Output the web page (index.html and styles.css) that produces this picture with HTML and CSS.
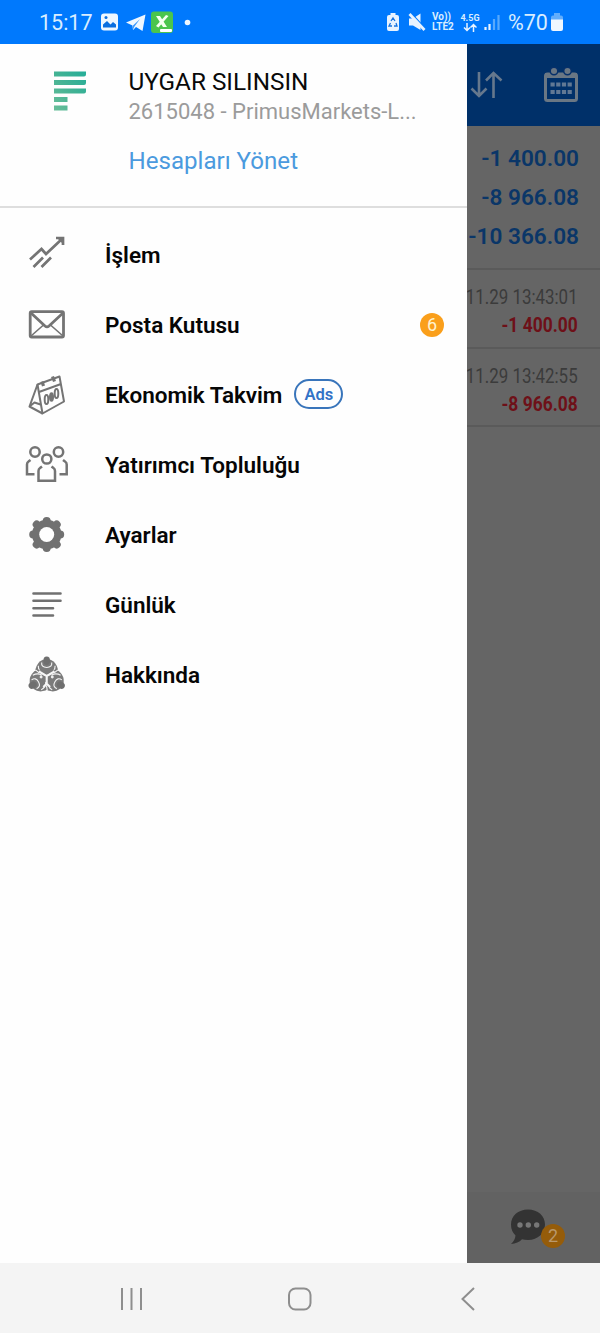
FILE: index.html
```html
<!DOCTYPE html>
<html lang="tr">
<head>
<meta charset="utf-8">
<title>Menü</title>
<link rel="stylesheet" href="styles.css">
</head>
<body>
<header class="status">
  <span class="clock">15:17</span>
  <svg class="status-left" width="94" height="24" viewBox="0 0 94 24">
    <rect x="1" y="2.500" width="17" height="17" rx="3" fill="#eef7ff"/>
    <path d="M3 16.500v-3l4-3.500 3.500 3.500 2.500-2.500 3 2.500v3z" fill="#0a6fe0"/><circle cx="6" cy="6.500" r="1.500" fill="#0a6fe0"/>
    <path d="M26 11.500L45.500 3.500 42.500 20 36 16 33 19 32.500 14.500z" fill="#eef7ff"/>
    <path d="M33 14.500l7-6.500-5.500 7.500-1.500 3z" fill="#3b98fc"/>
    <rect x="51" y="0.500" width="22" height="21.500" rx="3" fill="#4bc54d"/>
    <path d="M56 5h4l7 11h-4zM66 4l2.500 1-10 11.500-2.500-1.500z" fill="#f5fff0"/><rect x="60" y="18" width="12" height="3" rx="1" fill="#fff"/>
    <circle cx="87.500" cy="11.500" r="2.800" fill="#eef7ff"/>
  </svg>
  <div class="status-right">
    <svg width="41" height="20" viewBox="0 0 41 20">
      <path d="M1 5a2 2 0 0 1 2-2h1.500V1h5v2H11a2 2 0 0 1 2 2v12a2 2 0 0 1-2 2H3a2 2 0 0 1-2-2z" fill="#e8f3ff"/>
      <path d="M5 9l2-3 2 3M10 11l1 3H8M6 14H3l1.500-3" fill="none" stroke="#1874df" stroke-width="1.300"/>
      <path d="M23 6.500h4L34.500 1.500v16.500L27 13.500h-4z" fill="#e8f3ff"/>
      <path d="M26 2l13 14" stroke="#0079fd" stroke-width="1.200"/><path d="M23.500 2l15 16" stroke="#e8f3ff" stroke-width="2.700"/>
    </svg>
    <span class="tiny volte"><span>Vo))</span><span>LTE2</span></span>
    <span class="tiny net"><span>4.5G</span>
      <svg width="14" height="9" viewBox="0 0 14 9"><path d="M4 0v7.500M1 4.500l3 3 3-3M10.500 9V1.500M7.500 4.500l3-3 3 3" fill="none" stroke="#e8f3ff" stroke-width="1.500"/></svg>
    </span>
    <svg class="signal" width="17" height="17" viewBox="0 0 17 17"><path d="M1.500 13v3M5.500 10v6" stroke="#e8f3ff" stroke-width="2.200"/><path d="M10 5v11M14.500 1v15" stroke="#58a9fc" stroke-width="2.200"/></svg>
    <span class="percent">%70</span>
    <svg width="14" height="20" viewBox="0 0 14 20"><path d="M4 1h6V3.500h1a2 2 0 0 1 2 2v3H1v-3a2 2 0 0 1 2-2h1z" fill="#62adfb"/><path d="M1 7.500h12v9.500a2 2 0 0 1-2 2H3a2 2 0 0 1-2-2z" fill="#eff7ff"/></svg>
  </div>
</header>

<main class="screen">
  <aside class="drawer">
    <section class="account">
      <svg class="brand" width="34" height="42" viewBox="0 0 34 42">
        <defs><linearGradient id="g" gradientUnits="userSpaceOnUse" x1="0" y1="36" x2="34" y2="6"><stop offset="0" stop-color="#66bd99"/><stop offset=".5" stop-color="#45b394"/><stop offset="1" stop-color="#27ae98"/></linearGradient></defs>
        <path fill="url(#g)" d="M0 .5h32v3a2 2 0 0 1-2 2H0zM0 9h32v3a2 2 0 0 1-2 2H0zM0 17.500h32v3a2 2 0 0 1-2 2H0zM0 26h13.500v5H0zM0 34.500h13.500v5H0z"/>
      </svg>
      <div class="who">
        <span class="name">UYGAR SILINSIN</span>
        <span class="login">2615048 - PrimusMarkets-L...</span>
        <a class="manage">Hesapları Yönet</a>
      </div>
    </section>
    <nav class="menu">
      <a class="item"><svg class="icon" viewBox="0 0 44 44"><g fill="none" stroke="#747474" stroke-width="2.700"><path d="M5 26.500L16.500 16 21 21 38 5M8.500 34l9.500-9.500M16.500 34l9.500-9.500"/><path d="M31 5h7v7"/></g><path d="M31 4h8v8z" fill="#747474"/></svg><span class="label">İşlem</span></a>
      <a class="item"><svg class="icon" viewBox="0 0 44 44"><g fill="none" stroke="#747474" stroke-width="2.800"><rect x="5.200" y="8.700" width="33.300" height="25.300" rx="1.500"/><path d="M6 10l14 13q2 1.700 4 0l14-13"/><path d="M6 33l12.500-11M38 33l-12.500-11" stroke-width="1.600"/></g></svg><span class="label">Posta Kutusu</span><span class="badge">6</span></a>
      <a class="item"><svg class="icon" viewBox="0 0 44 44"><g fill="none" stroke="#747474" stroke-width="2" stroke-linejoin="round"><path d="M12.500 11.500L34.500 3.500 39 28.500 17.500 40.500z"/><path d="M14 19l22-8M12.500 11.500L4.500 33.500 17.500 40.500M4.500 33.500l5-4 6 2"/><path d="M17 8.500l1.500 4.500M27.500 3.500l2 5" stroke-width="3.200"/><ellipse cx="21.500" cy="26.500" rx="1.800" ry="4.500"/><ellipse cx="31.500" cy="20.500" rx="1.800" ry="4.500"/></g><ellipse cx="26.500" cy="24" rx="2.500" ry="4.800" fill="#747474"/></svg><span class="label takvim">Ekonomik Takvim</span><span class="ads">Ads</span></a>
      <a class="item"><svg class="icon" viewBox="0 0 44 44"><g fill="none" stroke="#747474" stroke-width="2.500"><circle cx="10" cy="9" r="4.700"/><circle cx="33.500" cy="9" r="4.700"/><circle cx="21.800" cy="16" r="4.600"/><path d="M5.500 17l-2 1.500q-1.500 1-1.500 3V31.200h7.500M38 17l2 1.500q1.700 1 1.700 3V31.200H34.500M17 23.500l-2 1.500q-1.500 1-1.500 3V37.800h16.500V28q0-2-1.500-3l-2-1.500"/></g></svg><span class="label">Yatırımcı Topluluğu</span></a>
      <a class="item"><svg class="icon" viewBox="0 0 44 44"><g transform="translate(21.700 21.500)"><g stroke="#717171" stroke-width="8" stroke-linecap="round"><path d="M0-13.500v27M-13.500 0h27M-10-10l20 20M10-10l-20 20"/></g><circle r="14.700" fill="#717171"/><circle r="7.500" fill="#fefefe"/></g></svg><span class="label">Ayarlar</span></a>
      <a class="item"><svg class="icon" viewBox="0 0 44 44"><path d="M8.500 10.500h27M8.500 17.700h27M8.500 25.200h19.500M8.500 32.500h19.500" fill="none" stroke="#707070" stroke-width="2.600" stroke-linecap="round"/></svg><span class="label">Günlük</span></a>
      <a class="item"><svg class="icon" viewBox="0 0 44 44">
        <defs><g id="lobe"><path d="M-3.500-15.500q-5 2-6.500 8.500l.5 4 5 2.500h9l5-2.500.5-4q-1.500-6.500-6.500-8.500z" fill="#7b7b7b"/><path d="M-4.500-13q-.5 4.500 4.500 4.500t4.500-4.500M-7.500-10q0 5 4 7M7.500-10q0 5-4 7M-10.500-5.500l4 1.500M10.500-5.500l-4 1.500" fill="none" stroke="#f4f4f4" stroke-width="1"/><ellipse cy="-14.500" rx="3" ry="3.800" fill="#6f6f6f"/></g></defs>
        <g transform="translate(21.700 24) scale(1.120)"><use href="#lobe"/><use href="#lobe" transform="rotate(120)"/><use href="#lobe" transform="rotate(240)"/><path d="M-7-5l5 3 2 1 2-1 5-3M0-1v7l-3 3M0 6l3 3" fill="none" stroke="#f7f7f7" stroke-width="1.900"/><circle cx="-5" cy="0" r="1.300" fill="#eee"/><circle cx="5" cy="0" r="1.300" fill="#eee"/></g>
      </svg><span class="label">Hakkında</span></a>
    </nav>
  </aside>

  <section class="behind">
    <div class="toolbar">
      <svg width="34" height="32" viewBox="0 0 34 32"><g fill="none" stroke="#66788d" stroke-width="2.600"><path d="M9 3v23.500M1.500 19.500l7.500 7.500L16.500 19.500M23.500 29V4M16 11.500l7.500-7.500 8 7.500"/></g></svg>
      <svg width="36" height="36" viewBox="0 0 36 36"><rect x="2.500" y="7" width="31" height="26.500" rx="2" fill="none" stroke="#6a7784" stroke-width="3"/><path d="M2 6h32v5H2z" fill="#6a7784"/><g fill="#6a7784" stroke="#06306a" stroke-width="1.500"><circle cx="11" cy="4" r="3.800"/><circle cx="24.500" cy="4" r="3.800"/></g><path d="M7.500 17.500h21.500M7.500 25h21.500" stroke="#617894" stroke-width="4.200" stroke-dasharray="4.200 1.500"/></svg>
    </div>
    <div class="totals"><span>-1 400.00</span><span>-8 966.08</span><span>-10 366.08</span></div>
    <div class="deal"><span class="date">11.29 13:43:01</span><span class="sum">-1 400.00</span></div>
    <div class="deal"><span class="date">11.29 13:42:55</span><span class="sum">-8 966.08</span></div>
    <div class="tabs">
      <svg width="38" height="38" viewBox="0 0 38 38"><path d="M19 1.500c10 0 17 6.500 17 15s-7 15.500-17 15.500q-3.500 0-6-.8Q9 35.500 2 36q4-3.500 4.500-8.500Q2 23 2 16.500C2 8 9 1.500 19 1.500z" fill="#333"/><g fill="#777"><circle cx="11" cy="17" r="2.700"/><circle cx="19.300" cy="17" r="2.700"/><circle cx="27.700" cy="17" r="2.700"/></g></svg>
      <span class="badge unread">2</span>
    </div>
  </section>
</main>

<footer class="navbar">
  <svg width="26" height="26" viewBox="0 0 26 26"><path d="M4 2v22M13.500 2v22M23 2v22" stroke="#8e8e8e" stroke-width="2"/></svg>
  <svg width="26" height="26" viewBox="0 0 26 26"><rect x="2" y="2.500" width="21.500" height="21" rx="6.500" fill="none" stroke="#8e8e8e" stroke-width="2"/></svg>
  <svg width="26" height="26" viewBox="0 0 26 26"><path d="M19 2L7.500 13l11.500 11" fill="none" stroke="#8e8e8e" stroke-width="2"/></svg>
</footer>
</body>
</html>
```
FILE: styles.css
```css
* { box-sizing: border-box; }
body { margin: 0; width: 600px; height: 1333px; display: flex; flex-direction: column; overflow: hidden; background: #fefefe; font-family: Roboto, "Noto Sans", sans-serif; }
svg { display: block; flex: none; }
span, a { white-space: nowrap; }

.status { height: 44px; flex: none; display: flex; align-items: center; background: #0079fd; color: #d9edff; padding: 0 36px 0 39px; }
.clock { font-size: 21.500px; width: 61px; }
.status-left { margin-top: 1px; }
.status-right { margin-left: auto; display: flex; align-items: center; }
.tiny { display: flex; flex-direction: column; font-size: 10px; font-weight: 700; line-height: 10px; margin-left: 5px; }
.volte { width: 23px; }
.net { width: 20px; align-items: center; font-size: 9px; }
.signal { margin: 1px 7px 0 4px; }
.percent { font-size: 21.500px; width: 42px; }

.screen { height: 1219px; flex: none; display: flex; }
.drawer { width: 467px; flex: none; background: #fefefe; }
.account { height: 164px; display: flex; gap: 40.500px; padding: 23px 0 0 54px; border-bottom: 2px solid #dedede; }
.brand { margin-top: 4px; }
.who { display: flex; flex-direction: column; align-items: flex-start; line-height: 30px; }
.name { color: #090909; font-size: 24.300px; }
.login { color: #9b9b9b; font-size: 22px; }
.manage { color: #4b9ade; font-size: 24.100px; margin-top: 19px; }

.menu { display: flex; flex-direction: column; padding-top: 12px; }
.item { height: 70px; display: flex; align-items: center; padding: 0 23px 0 25px; }
.icon { width: 44px; height: 44px; margin-right: 36px; }
.label { font-size: 22.500px; font-weight: 600; color: #060606; }
.takvim { letter-spacing: -.03px; }
.badge { display: grid; place-items: center; width: 24px; height: 24px; border-radius: 50%; margin-left: auto; background: #fa9f1b; color: #fff3cf; font-size: 18px; line-height: 24px; }
.ads { display: grid; place-items: center; width: 49px; height: 30px; margin: -2px 0 0 12px; border: 2px solid #3975bb; border-radius: 15px; color: #3272c6; font-size: 16.500px; font-weight: 600; }

.behind { width: 133px; flex: none; display: flex; flex-direction: column; overflow: hidden; background: #656565; }
.toolbar { height: 82px; flex: none; display: flex; align-items: center; justify-content: space-between; padding: 0 21px 0 3px; background: #003069; }
.totals { height: 144px; flex: none; display: flex; flex-direction: column; align-items: flex-end; padding: 13px 21px 0 0; border-bottom: 2px solid #5a5a5a; color: #0a3668; font-size: 22.600px; font-weight: 600; line-height: 39px; }
.deal { height: 78.500px; flex: none; display: flex; flex-direction: column; align-items: flex-end; padding: 13px 22px 0 0; border-bottom: 2px solid #5a5a5a; font-size: 20.500px; line-height: 28px; }
.date, .sum { transform: scaleX(.825); transform-origin: right; }
.date { color: #3b3b3b; }
.sum { color: #6e1018; font-weight: 700; transform: scaleX(.85); }
.tabs { height: 71px; margin-top: auto; display: flex; align-items: flex-start; padding: 16px 0 0 42px; background: #626262; }
.unread { margin: 16px 0 0 -6px; background: #955c0a; color: #b9986b; }

.navbar { height: 70px; display: flex; align-items: center; justify-content: space-between; padding: 1px 119px 0 118px; background: #f4f4f4; }
```
